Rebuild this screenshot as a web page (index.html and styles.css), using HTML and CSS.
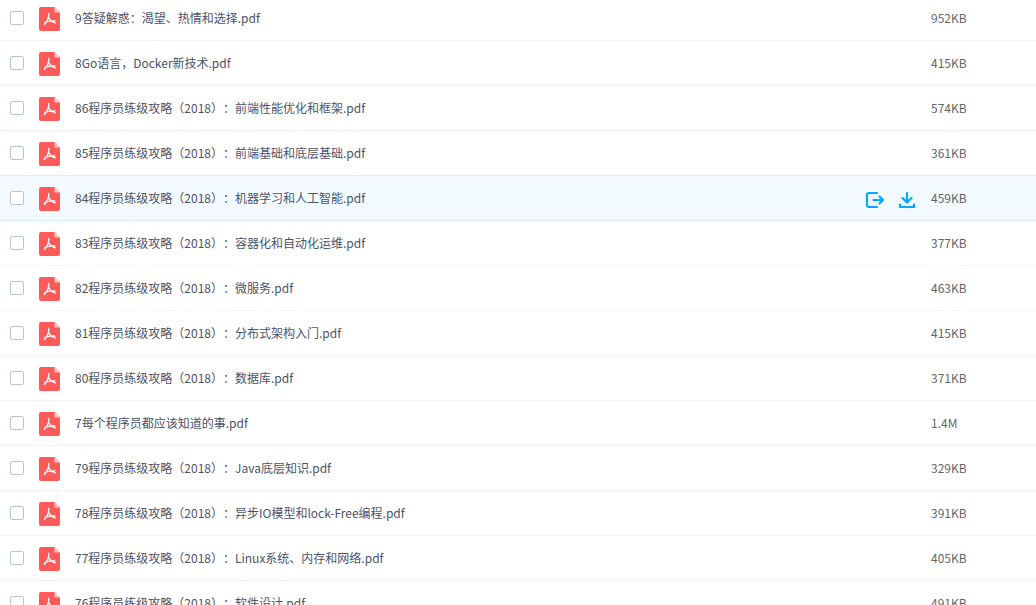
FILE: index.html
```html
<!DOCTYPE html>
<html lang="zh">
<head>
<meta charset="utf-8">
<title>文件列表</title>
<link rel="stylesheet" href="styles.css">
</head>
<body>
<svg class="defs" width="0" height="0" aria-hidden="true">
  <symbol id="pdf" viewBox="0 0 21 24">
    <path d="M2 0H15.5L21 5.5V22a2 2 0 0 1-2 2H2a2 2 0 0 1-2-2V2a2 2 0 0 1 2-2Z" fill="#ff5a5a"/>
    <path d="M15.5 0L21 5.500H15.500Z" fill="#ffc4c4"/>
    <path d="M9.800 6.500C10 9.500 8.500 14 5.300 17.600M9.800 10.800C11 13.500 13 15 16.300 15.800M5.800 15.500C8.500 14.200 12 13.600 15.800 14" fill="none" stroke="#fff" stroke-width="1.300" stroke-linecap="round"/>
  </symbol>
</svg>
<ul class="list">
  <li class="row"><span class="check"></span><svg class="file-icon"><use href="#pdf"/></svg><span class="name">9答疑解惑：渴望、热情和选择.pdf</span><span class="size">952KB</span></li>
  <li class="row"><span class="check"></span><svg class="file-icon"><use href="#pdf"/></svg><span class="name">8Go语言，Docker新技术.pdf</span><span class="size">415KB</span></li>
  <li class="row"><span class="check"></span><svg class="file-icon"><use href="#pdf"/></svg><span class="name">86程序员练级攻略（2018）：前端性能优化和框架.pdf</span><span class="size">574KB</span></li>
  <li class="row"><span class="check"></span><svg class="file-icon"><use href="#pdf"/></svg><span class="name">85程序员练级攻略（2018）：前端基础和底层基础.pdf</span><span class="size">361KB</span></li>
  <li class="row active"><span class="check"></span><svg class="file-icon"><use href="#pdf"/></svg><span class="name">84程序员练级攻略（2018）：机器学习和人工智能.pdf</span>
    <span class="actions">
      <svg class="action" viewBox="0 0 20 20" fill="none" stroke="#06a7ff" stroke-width="2.200" stroke-linecap="round" stroke-linejoin="round"><path d="M12 5H4a2 2 0 0 0-2 2v10a2 2 0 0 0 2 2h8M8.500 12H18M14.500 8.500L18 12L14.500 15.500"/></svg>
      <svg class="action" viewBox="0 0 20 20" fill="none" stroke="#06a7ff" stroke-width="2.200" stroke-linecap="round" stroke-linejoin="round"><path d="M10 5V14M5.500 10L10 14.500L14.500 10M3 16.500V19H17V16.500"/></svg>
    </span>
    <span class="size">459KB</span></li>
  <li class="row"><span class="check"></span><svg class="file-icon"><use href="#pdf"/></svg><span class="name">83程序员练级攻略（2018）：容器化和自动化运维.pdf</span><span class="size">377KB</span></li>
  <li class="row"><span class="check"></span><svg class="file-icon"><use href="#pdf"/></svg><span class="name">82程序员练级攻略（2018）：微服务.pdf</span><span class="size">463KB</span></li>
  <li class="row"><span class="check"></span><svg class="file-icon"><use href="#pdf"/></svg><span class="name">81程序员练级攻略（2018）：分布式架构入门.pdf</span><span class="size">415KB</span></li>
  <li class="row"><span class="check"></span><svg class="file-icon"><use href="#pdf"/></svg><span class="name">80程序员练级攻略（2018）：数据库.pdf</span><span class="size">371KB</span></li>
  <li class="row"><span class="check"></span><svg class="file-icon"><use href="#pdf"/></svg><span class="name">7每个程序员都应该知道的事.pdf</span><span class="size">1.4M</span></li>
  <li class="row"><span class="check"></span><svg class="file-icon"><use href="#pdf"/></svg><span class="name">79程序员练级攻略（2018）：Java底层知识.pdf</span><span class="size">329KB</span></li>
  <li class="row"><span class="check"></span><svg class="file-icon"><use href="#pdf"/></svg><span class="name">78程序员练级攻略（2018）：异步IO模型和lock-Free编程.pdf</span><span class="size">391KB</span></li>
  <li class="row"><span class="check"></span><svg class="file-icon"><use href="#pdf"/></svg><span class="name">77程序员练级攻略（2018）：Linux系统、内存和网络.pdf</span><span class="size">405KB</span></li>
  <li class="row"><span class="check"></span><svg class="file-icon"><use href="#pdf"/></svg><span class="name">76程序员练级攻略（2018）：软件设计.pdf</span><span class="size">491KB</span></li>
</ul>
</body>
</html>
```
FILE: styles.css
```css
html, body {
  margin: 0;
  height: 100%;
  overflow: hidden;
  background: #fff;
}
.defs {
  position: absolute;
}
.list {
  list-style: none;
  margin: -4px 0 0;
  padding: 0;
  font-family: "Noto Sans CJK SC", sans-serif;
  font-size: 12px;
  text-spacing-trim: space-all;
}
.row {
  display: flex;
  align-items: center;
  height: 45px;
  box-sizing: border-box;
  border-bottom: 1px solid #f1f4f9;
  padding-left: 10px;
}
.row.active {
  background: #f2faff;
  border-top: 1px solid #d9efff;
  border-bottom: 1px solid #d9efff;
  height: 46px;
  margin-top: -1px;
}
.check {
  width: 14px;
  height: 14px;
  box-sizing: border-box;
  border: 1px solid #b9c4d6;
  border-radius: 2px;
  background: #fff;
  flex: none;
}
.file-icon {
  width: 21px;
  height: 24px;
  margin: 2px 0 0 15px;
  flex: none;
}
.name {
  margin-left: 15px;
  padding-bottom: 2px;
  flex: 1;
  color: #4c5268;
  white-space: nowrap;
}
.actions {
  display: flex;
  gap: 12px;
  margin-right: 14px;
}
.action {
  width: 20px;
  height: 20px;
  display: block;
}
.size {
  width: 105px;
  padding-bottom: 2px;
  flex: none;
  color: #666;
}
```
